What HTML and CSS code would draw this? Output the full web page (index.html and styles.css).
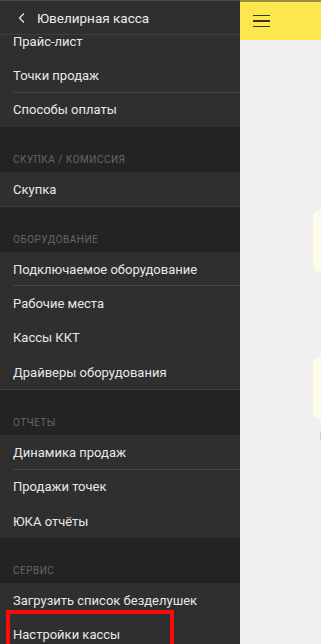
FILE: index.html
```html
<!DOCTYPE html>
<html lang="ru">
<head>
  <meta charset="UTF-8">
  <meta name="viewport" content="width=device-width, initial-scale=1.0">
  <title>Ювелирная касса</title>
  <link rel="stylesheet" href="styles.css">
</head>
<body>
  <div class="app">
    <!-- Drawer -->
    <aside class="drawer">
      <div class="drawer-head">
        <svg class="back" width="10" height="12" viewBox="0 0 10 12">
          <polyline points="7,1.5 2.5,6 7,10.5" fill="none" stroke="#e6e6e6" stroke-width="1.3"/>
        </svg>
        <span class="drawer-title">Ювелирная касса</span>
      </div>
      <div class="drawer-body">
        <div class="drawer-list">
          <div class="group-items">
            <div class="item">Прайс-лист</div>
            <div class="item sep">Точки продаж</div>
            <div class="item">Способы оплаты</div>
          </div>

          <div class="group-title">Скупка / комиссия</div>
          <div class="group-items closed">
            <div class="item">Скупка</div>
          </div>

          <div class="group-title">Оборудование</div>
          <div class="group-items closed">
            <div class="item sep">Подключаемое оборудование</div>
            <div class="item">Рабочие места</div>
            <div class="item">Кассы ККТ</div>
            <div class="item">Драйверы оборудования</div>
          </div>

          <div class="group-title">Отчеты</div>
          <div class="group-items">
            <div class="item sep">Динамика продаж</div>
            <div class="item">Продажи точек</div>
            <div class="item">ЮКА отчёты</div>
          </div>

          <div class="group-title">Сервис</div>
          <div class="group-items">
            <div class="item">Загрузить список безделушек</div>
            <div class="item">Настройки кассы</div>
          </div>
        </div>
      </div>
      <div class="highlight"></div>
    </aside>

    <!-- Main screen behind the drawer -->
    <main class="main">
      <div class="topbar">
        <div class="burger"><span></span><span></span><span></span></div>
      </div>
      <div class="content">
        <div class="card"></div>
        <div class="card"></div>
        <div class="peek">Г</div>
      </div>
    </main>
  </div>
</body>
</html>
```

FILE: styles.css
```css
body {
  margin: 0;
  padding: 0;
  font-family: Roboto, "Noto Sans", sans-serif;
  background: #f0f0f0;
  overflow: hidden;
}

.app {
  display: flex;
  height: 644px;
  overflow: hidden;
}

/* Drawer */
.drawer {
  position: relative;
  width: 240px;
  flex: 0 0 240px;
  background: #232323;
  display: flex;
  flex-direction: column;
  overflow: hidden;
}

.drawer-head {
  height: 33px;
  flex: 0 0 33px;
  background: #2f2f2f;
  border-top: 1px solid #4a4a4a;
  border-bottom: 1px solid #3e3e3e;
  display: flex;
  align-items: center;
  padding-left: 17px;
  position: relative;
  z-index: 1;
}

.back {
  margin-right: 10px;
}

.drawer-title {
  color: #ececec;
  font-size: 13.5px;
}

.drawer-body {
  flex: 1;
  overflow: hidden;
}

.drawer-list {
  margin-top: -11px;
}

.group-items {
  background: #2f2f2f;
}

.group-items.closed {
  border-bottom: 1px solid #3f3f3f;
}

.item {
  height: 34.3px;
  display: flex;
  align-items: center;
  padding-left: 13px;
  color: #e8e8e8;
  font-size: 13px;
  position: relative;
  white-space: nowrap;
}

.item.sep::after {
  content: "";
  position: absolute;
  left: 13px;
  right: 0;
  bottom: 0;
  height: 1px;
  background: #454545;
}

.group-title {
  height: 45px;
  box-sizing: border-box;
  display: flex;
  align-items: flex-end;
  padding: 0 13px 7px;
  color: #666;
  font-size: 10px;
  text-transform: uppercase;
  letter-spacing: 0.5px;
}

.highlight {
  position: absolute;
  left: 6px;
  top: 610px;
  width: 160px;
  height: 40px;
  border: 4px solid #ff0a0a;
}

/* Main */
.main {
  flex: 1;
  background: #f0f0f0;
  overflow: hidden;
}

.topbar {
  height: 38px;
  background: #fce74e;
  border-top: 2px solid #9a8d42;
  display: flex;
  align-items: center;
  padding-left: 13px;
}

.burger {
  width: 17px;
  display: flex;
  flex-direction: column;
  gap: 4px;
}

.burger span {
  height: 1.3px;
  background: #3a3520;
}

.content {
  padding-top: 170px;
  padding-left: 73px;
}

.card {
  width: 120px;
  height: 62px;
  background: #fffbe9;
  border-radius: 7px;
  margin-bottom: 85px;
}

.card + .card {
  margin-bottom: 12px;
}

.peek {
  margin-left: 7px;
  font-size: 11px;
  line-height: 12px;
  color: #222;
}
```
